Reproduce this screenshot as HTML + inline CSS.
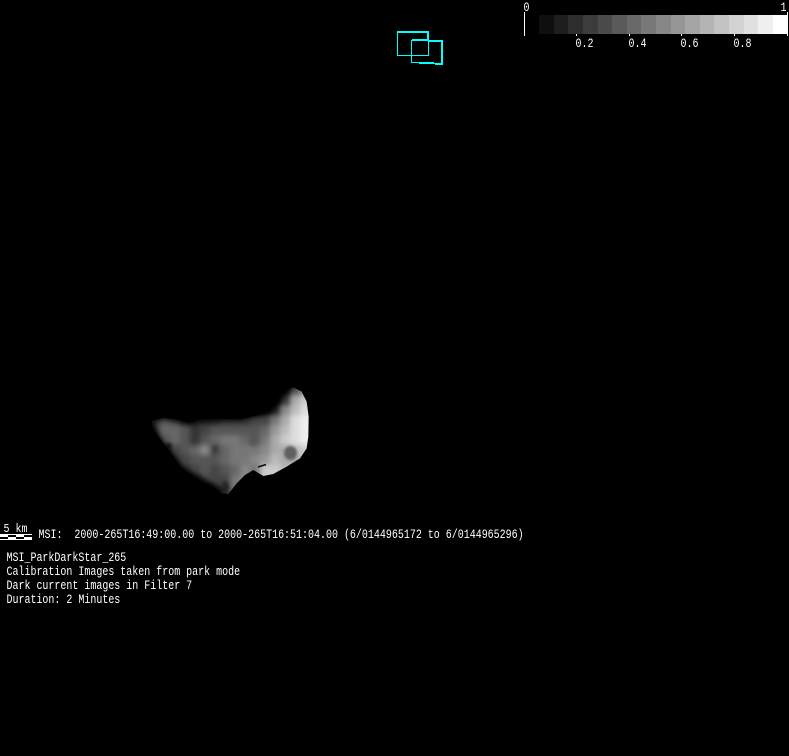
<!DOCTYPE html>
<html>
<head>
<meta charset="utf-8">
<style>
html,body{margin:0;padding:0;background:#000;}
body{width:789px;height:756px;overflow:hidden;position:relative;}
svg{position:absolute;left:0;top:0;}
text{font-family:"Liberation Mono",monospace;font-size:10px;fill:#fff;white-space:pre;}
.a rect{width:10.5px;height:10.5px;}
</style>
</head>
<body>
<svg width="789" height="756" viewBox="0 0 789 756" xmlns="http://www.w3.org/2000/svg" xml:space="preserve">
<defs>
<filter id="edge" color-interpolation-filters="sRGB" x="-10%" y="-10%" width="120%" height="120%"><feGaussianBlur stdDeviation="0.7"/></filter>
<mask id="m" maskUnits="userSpaceOnUse" x="130" y="370" width="200" height="140">
<path transform="translate(140 380) scale(.33333)" fill="#fff" filter="url(#edge)" d="M36 122L70 113L110 118L150 128L180 118L230 116L300 118L350 106L390 92L410 66L430 32L460 22L485 35L500 65L506 110L505 170L500 205L480 235L440 260L400 282L370 288L340 270L315 285L290 310L265 342L245 340L215 318L170 295L125 265L90 215L55 170L36 140Z"/>
</mask>
<filter id="s" color-interpolation-filters="sRGB" x="-10%" y="-10%" width="120%" height="120%"><feGaussianBlur stdDeviation="2.6"/></filter>
<filter id="s1" color-interpolation-filters="sRGB" x="-60%" y="-60%" width="220%" height="220%"><feGaussianBlur stdDeviation="1.2"/></filter>
<filter id="s2" color-interpolation-filters="sRGB" x="-20%" y="-40%" width="140%" height="180%"><feGaussianBlur stdDeviation="2.2"/></filter>
</defs>

<!-- asteroid -->
<g mask="url(#m)">
<g class="a" filter="url(#s)">
<rect x="290" y="385" fill="#555"/><rect x="300" y="385" fill="#888"/>
<rect x="280" y="395" fill="#333"/><rect x="290" y="395" fill="#aaa"/><rect x="300" y="395" fill="#ccc"/><rect x="310" y="395" fill="#ccc"/>
<rect x="270" y="405" fill="#222"/><rect x="280" y="405" fill="#888"/><rect x="290" y="405" fill="#bbb"/><rect x="300" y="405" fill="#ddd"/><rect x="310" y="405" fill="#ddd"/>
<rect x="150" y="415" fill="#444"/><rect x="160" y="415" fill="#555"/><rect x="170" y="415" fill="#444"/><rect x="180" y="415" fill="#222"/><rect x="190" y="415" fill="#222"/><rect x="200" y="415" fill="#222"/><rect x="210" y="415" fill="#222"/><rect x="220" y="415" fill="#333"/><rect x="230" y="415" fill="#333"/><rect x="240" y="415" fill="#333"/><rect x="250" y="415" fill="#444"/><rect x="260" y="415" fill="#444"/><rect x="270" y="415" fill="#777"/><rect x="280" y="415" fill="#aaa"/><rect x="290" y="415" fill="#ddd"/><rect x="300" y="415" fill="#eee"/><rect x="310" y="415" fill="#eee"/>
<rect x="140" y="425" fill="#222"/><rect x="150" y="425" fill="#444"/><rect x="160" y="425" fill="#666"/><rect x="170" y="425" fill="#666"/><rect x="180" y="425" fill="#555"/><rect x="190" y="425" fill="#333"/><rect x="200" y="425" fill="#444"/><rect x="210" y="425" fill="#555"/><rect x="220" y="425" fill="#555"/><rect x="230" y="425" fill="#555"/><rect x="240" y="425" fill="#555"/><rect x="250" y="425" fill="#555"/><rect x="260" y="425" fill="#666"/><rect x="270" y="425" fill="#999"/><rect x="280" y="425" fill="#bbb"/><rect x="290" y="425" fill="#ddd"/><rect x="300" y="425" fill="#eee"/><rect x="310" y="425" fill="#eee"/>
<rect x="150" y="435" fill="#222"/><rect x="160" y="435" fill="#555"/><rect x="170" y="435" fill="#666"/><rect x="180" y="435" fill="#555"/><rect x="190" y="435" fill="#333"/><rect x="200" y="435" fill="#555"/><rect x="210" y="435" fill="#666"/><rect x="220" y="435" fill="#777"/><rect x="230" y="435" fill="#777"/><rect x="240" y="435" fill="#666"/><rect x="250" y="435" fill="#555"/><rect x="260" y="435" fill="#777"/><rect x="270" y="435" fill="#aaa"/><rect x="280" y="435" fill="#ccc"/><rect x="290" y="435" fill="#ddd"/><rect x="300" y="435" fill="#eee"/><rect x="310" y="435" fill="#eee"/>
<rect x="160" y="445" fill="#222"/><rect x="170" y="445" fill="#444"/><rect x="180" y="445" fill="#555"/><rect x="190" y="445" fill="#666"/><rect x="200" y="445" fill="#888"/><rect x="210" y="445" fill="#444"/><rect x="220" y="445" fill="#666"/><rect x="230" y="445" fill="#777"/><rect x="240" y="445" fill="#777"/><rect x="250" y="445" fill="#777"/><rect x="260" y="445" fill="#888"/><rect x="270" y="445" fill="#aaa"/><rect x="280" y="445" fill="#aaa"/><rect x="290" y="445" fill="#bbb"/><rect x="300" y="445" fill="#ccc"/><rect x="310" y="445" fill="#ddd"/>
<rect x="170" y="455" fill="#333"/><rect x="180" y="455" fill="#444"/><rect x="190" y="455" fill="#555"/><rect x="200" y="455" fill="#555"/><rect x="210" y="455" fill="#555"/><rect x="220" y="455" fill="#666"/><rect x="230" y="455" fill="#777"/><rect x="240" y="455" fill="#777"/><rect x="250" y="455" fill="#888"/><rect x="260" y="455" fill="#999"/><rect x="270" y="455" fill="#bbb"/><rect x="280" y="455" fill="#aaa"/><rect x="290" y="455" fill="#aaa"/><rect x="300" y="455" fill="#ccc"/>
<rect x="180" y="465" fill="#333"/><rect x="190" y="465" fill="#444"/><rect x="200" y="465" fill="#555"/><rect x="210" y="465" fill="#444"/><rect x="220" y="465" fill="#555"/><rect x="230" y="465" fill="#666"/><rect x="240" y="465" fill="#888"/><rect x="250" y="465" fill="#777"/><rect x="260" y="465" fill="#ccc"/><rect x="270" y="465" fill="#ccc"/><rect x="280" y="465" fill="#bbb"/><rect x="290" y="465" fill="#bbb"/><rect x="300" y="465" fill="#bbb"/>
<rect x="190" y="475" fill="#222"/><rect x="200" y="475" fill="#444"/><rect x="210" y="475" fill="#444"/><rect x="220" y="475" fill="#444"/><rect x="230" y="475" fill="#777"/><rect x="240" y="475" fill="#888"/><rect x="250" y="475" fill="#888"/><rect x="260" y="475" fill="#ccc"/><rect x="270" y="475" fill="#ccc"/><rect x="280" y="475" fill="#ccc"/>
<rect x="210" y="485" fill="#222"/><rect x="220" y="485" fill="#333"/><rect x="230" y="485" fill="#777"/><rect x="240" y="485" fill="#777"/>
</g>
<ellipse cx="290.5" cy="453" rx="6.5" ry="7" fill="#606060" filter="url(#s1)"/>
<ellipse cx="253" cy="442" rx="4" ry="4" fill="#555" opacity=".6" filter="url(#s1)"/>
<ellipse cx="215" cy="449" rx="2" ry="4" fill="#333" opacity=".6" filter="url(#s1)"/>
<ellipse cx="169" cy="446" rx="3" ry="3.5" fill="#111" opacity=".7" filter="url(#s1)"/>
<ellipse cx="225" cy="487" rx="4" ry="6" fill="#222" opacity=".75" filter="url(#s1)"/>
<path d="M258 467L266 464.500" fill="none" stroke="#0a0a0a" stroke-width="1.500"/>
<!-- soft dark limb along the unlit edges -->
<path d="M150 420L163 416L177 418L190 421L200 418L217 417L240 417L257 413L270 409L277 400L283 389L293 385" fill="none" stroke="#000" stroke-width="7" stroke-opacity=".85" filter="url(#s2)"/>
<path d="M150 422L156 438L168 453L180 469L196 479L211 487L221 495" fill="none" stroke="#000" stroke-width="8" stroke-opacity=".85" filter="url(#s2)"/>
</g>

<!-- footprint outlines -->
<g fill="#00ffff" shape-rendering="crispEdges">
<rect x="397" y="31" width="32" height="2"/>
<rect x="397" y="31" width="1" height="25"/>
<rect x="397" y="55" width="32" height="1"/>
<rect x="428" y="32" width="1" height="24"/>
<rect x="427" y="32" width="2" height="8"/>
</g>
<g fill="#00ffff" shape-rendering="crispEdges">
<rect x="412" y="39" width="16" height="2"/>
<rect x="428" y="40" width="15" height="2"/>
<rect x="441" y="41" width="2" height="24"/>
<rect x="411" y="40" width="1" height="23"/>
<rect x="411" y="62" width="23" height="1"/>
<rect x="419" y="62" width="8" height="2"/>
<rect x="427" y="63" width="16" height="1"/>
<rect x="435" y="63" width="8" height="2"/>
</g>

<!-- colour bar -->
<g shape-rendering="crispEdges">
<rect x="539" y="15" width="15" height="19" fill="#0f0f0f"/>
<rect x="554" y="15" width="14" height="19" fill="#1e1e1e"/>
<rect x="568" y="15" width="15" height="19" fill="#2d2d2d"/>
<rect x="583" y="15" width="15" height="19" fill="#3c3c3c"/>
<rect x="598" y="15" width="14" height="19" fill="#4b4b4b"/>
<rect x="612" y="15" width="15" height="19" fill="#5a5a5a"/>
<rect x="627" y="15" width="14" height="19" fill="#696969"/>
<rect x="641" y="15" width="15" height="19" fill="#787878"/>
<rect x="656" y="15" width="15" height="19" fill="#878787"/>
<rect x="671" y="15" width="14" height="19" fill="#969696"/>
<rect x="685" y="15" width="15" height="19" fill="#a5a5a5"/>
<rect x="700" y="15" width="14" height="19" fill="#b4b4b4"/>
<rect x="714" y="15" width="15" height="19" fill="#c3c3c3"/>
<rect x="729" y="15" width="15" height="19" fill="#d2d2d2"/>
<rect x="744" y="15" width="14" height="19" fill="#e1e1e1"/>
<rect x="758" y="15" width="15" height="19" fill="#f0f0f0"/>
<rect x="773" y="15" width="15" height="19" fill="#fff"/>
<rect x="524" y="12" width="1" height="24" fill="#fff"/>
<rect x="787" y="12" width="1" height="24" fill="#fff"/>
<rect x="576" y="34" width="1" height="2" fill="#fff"/>
<rect x="629" y="34" width="1" height="2" fill="#fff"/>
<rect x="681" y="34" width="1" height="2" fill="#fff"/>
<rect x="734" y="34" width="1" height="2" fill="#fff"/>
</g>
<text transform="translate(523.500 11) scale(1 1.25)">0</text>
<text transform="translate(780.500 11) scale(1 1.25)">1</text>
<text transform="translate(575.500 47) scale(1 1.25)">0.2</text>
<text transform="translate(628.500 47) scale(1 1.25)">0.4</text>
<text transform="translate(680.500 47) scale(1 1.25)">0.6</text>
<text transform="translate(733.500 47) scale(1 1.25)">0.8</text>

<!-- scale bar -->
<g shape-rendering="crispEdges" fill="#fff">
<rect x="0" y="534" width="32" height="1"/>
<rect x="0" y="539" width="32" height="1"/>
<rect x="0" y="535" width="8" height="2"/>
<rect x="16" y="535" width="8" height="2"/>
<rect x="8" y="537" width="8" height="2"/>
<rect x="24" y="537" width="8" height="2"/>
</g>
<text transform="translate(3.500 532) scale(1 1.2)">5 km</text>

<!-- captions -->
<text transform="translate(38.500 538) scale(1 1.25)">MSI:  2000-265T16:49:00.00 to 2000-265T16:51:04.00 (6/0144965172 to 6/0144965296)</text>
<text transform="translate(6.500 561) scale(1 1.25)">MSI_ParkDarkStar_265</text>
<text transform="translate(6.500 575) scale(1 1.25)">Calibration Images taken from park mode</text>
<text transform="translate(6.500 589) scale(1 1.25)">Dark current images in Filter 7</text>
<text transform="translate(6.500 603) scale(1 1.25)">Duration: 2 Minutes</text>
</svg>
</body>
</html>
